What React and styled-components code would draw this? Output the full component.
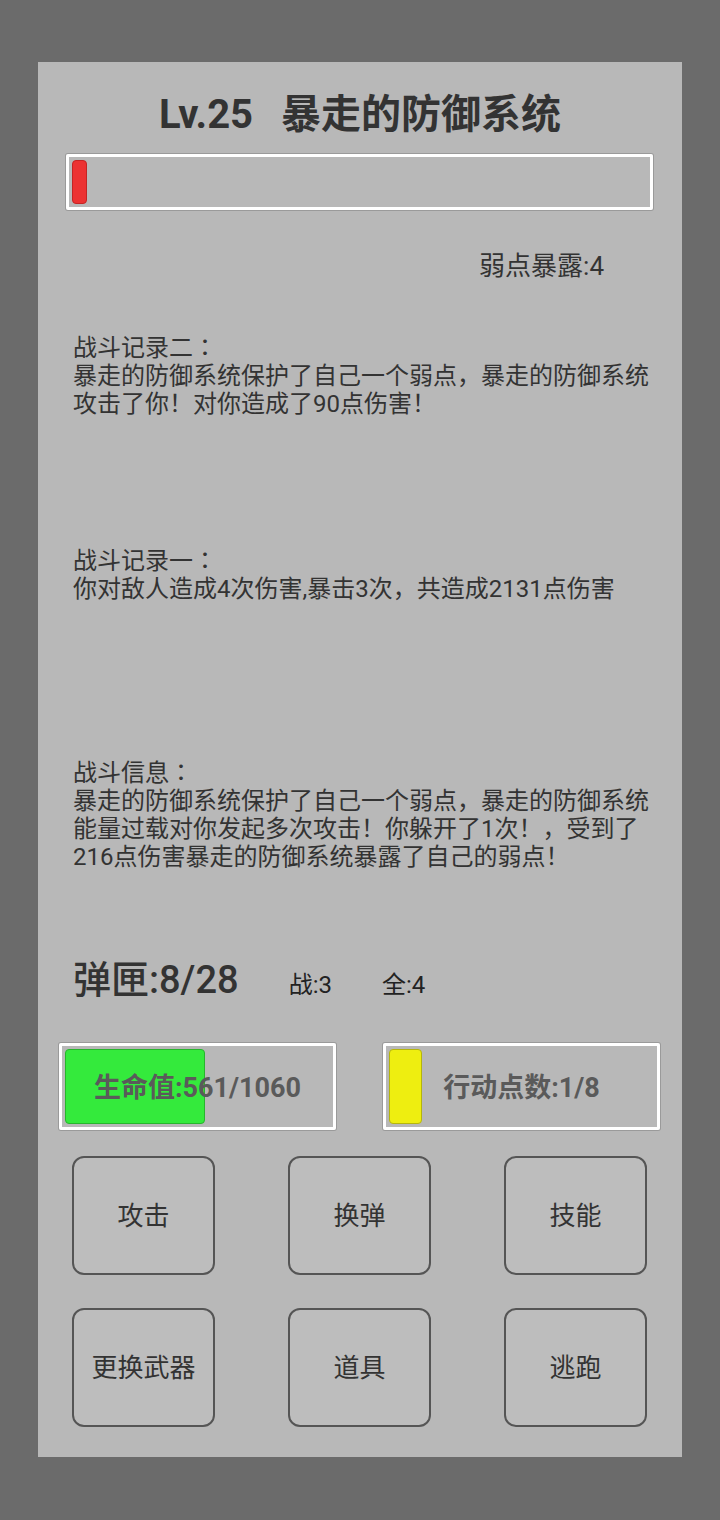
import React from 'react';
import styled, { createGlobalStyle } from 'styled-components';

const Global = createGlobalStyle`
  html, body {
    margin: 0;
    padding: 0;
    background: #6b6b6b;
  }
  body {
    font-family: Roboto, "Noto Sans CJK SC", sans-serif;
  }
`;

const Screen = {
    Page: styled.div`
        width: 720px;
        height: 1520px;
        padding: 62px 38px 0;
        box-sizing: border-box;
    `,
    Panel: styled.div`
        width: 644px;
        height: 1395px;
        background: #b8b8b8;
        box-sizing: border-box;
        padding-top: 29px;
        display: flex;
        flex-direction: column;
        color: #333;
        & > * {
            flex-shrink: 0;
        }
    `,
    Title: styled.h1`
        margin: 0;
        height: 48px;
        line-height: 48px;
        font-size: 40px;
        font-weight: 700;
        text-align: center;
        color: #333;
        word-spacing: 18px;
    `,
    Weak: styled.div`
        margin: 42px 78px 0 0;
        align-self: flex-end;
        font-size: 26px;
        line-height: 28px;
    `,
}

const Bar = {
    Frame: styled.div`
        position: relative;
        box-sizing: border-box;
        border: 3px solid #fff;
        box-shadow: 0 0 0 1px #9a9a9a;
        border-radius: 2px;
        padding: 3px;
        display: flex;
        height: ${p => p.$h}px;
    `,
    Fill: styled.div`
        height: 100%;
        box-sizing: border-box;
        border-radius: 4px;
        background: ${p => p.$color};
        border: 1px solid ${p => p.$edge};
    `,
    Label: styled.span`
        position: absolute;
        inset: 0;
        display: flex;
        align-items: center;
        justify-content: center;
        padding-bottom: 3px;
        font-size: 27px;
        font-weight: 700;
        color: #5a5a5a;
    `,
}

const BossBar = styled(Bar.Frame)`
    margin: 15px 29px 0 28px;
`;

const Log = {
    List: styled.div`
        margin-top: 54px;
        padding-left: 35px;
        padding-right: 20px;
    `,
    Block: styled.div`
        height: ${p => p.$h ? `${p.$h}px` : 'auto'};
        font-size: 24px;
        line-height: 28px;
        color: #333;
        white-space: pre-line;
    `,
    Head: styled.div`
        font-family: Roboto, "Noto Sans CJK JP", sans-serif;
    `,
}

const Ammo = {
    Row: styled.div`
        margin: 86px 0 0 35px;
        display: flex;
        align-items: baseline;
        gap: 50px;
    `,
    Main: styled.span`
        font-size: 38px;
        line-height: 46px;
        font-weight: 500;
        color: #333;
    `,
    Small: styled.span`
        font-size: 24px;
        color: #222;
    `,
}

const Stats = styled.div`
    margin: 40px 22px 0 21px;
    display: grid;
    grid-template-columns: 1fr 1fr;
    column-gap: 47px;
`;

const Actions = {
    Grid: styled.div`
        margin: 26px 35px 0 34px;
        display: grid;
        grid-template-columns: repeat(3, 143px);
        grid-auto-rows: 119px;
        justify-content: space-between;
        row-gap: 33px;
    `,
    Button: styled.button`
        box-sizing: border-box;
        background: #bdbdbd;
        border: 2px solid #555;
        border-radius: 12px;
        font-family: "Noto Sans CJK SC", sans-serif;
        font-size: 26px;
        color: #333;
        padding: 0 0 4px;
    `,
}

const logs = [
    { h: 213, head: '战斗记录二：', text: '暴走的防御系统保护了自己一个弱点，暴走的防御系统\n攻击了你！对你造成了90点伤害！' },
    { h: 212, head: '战斗记录一：', text: '你对敌人造成4次伤害,暴击3次，共造成2131点伤害' },
    { head: '战斗信息：', text: '暴走的防御系统保护了自己一个弱点，暴走的防御系统\n能量过载对你发起多次攻击！你躲开了1次！，受到了\n216点伤害暴走的防御系统暴露了自己的弱点！' },
];

const buttons = ['攻击', '换弹', '技能', '更换武器', '道具', '逃跑'];

function App() {
    const hp = 561, hpMax = 1060;
    const ap = 1, apMax = 8;

    return (
        <Screen.Page>
            <Global />
            <Screen.Panel>
                <Screen.Title>Lv.25 暴走的防御系统</Screen.Title>
                <BossBar $h={56}>
                    <Bar.Fill $color="#ec3232" $edge="#c42424" style={{ width: '2.6%' }} />
                </BossBar>
                <Screen.Weak>弱点暴露:4</Screen.Weak>

                <Log.List>
                    {logs.map((l, i) => (
                        <Log.Block key={i} $h={l.h}>
                            <Log.Head>{l.head}</Log.Head>
                            {l.text}
                        </Log.Block>
                    ))}
                </Log.List>

                <Ammo.Row>
                    <Ammo.Main>弹匣:8/28</Ammo.Main>
                    <Ammo.Small>战:3</Ammo.Small>
                    <Ammo.Small>全:4</Ammo.Small>
                </Ammo.Row>

                <Stats>
                    <Bar.Frame $h={87}>
                        <Bar.Fill $color="#34ea3c" $edge="#27b52d" style={{ width: `${(hp / hpMax) * 100}%` }} />
                        <Bar.Label>生命值:{hp}/{hpMax}</Bar.Label>
                    </Bar.Frame>
                    <Bar.Frame $h={87}>
                        <Bar.Fill $color="#eeee10" $edge="#b5b50c" style={{ width: `${(ap / apMax) * 100}%` }} />
                        <Bar.Label>行动点数:{ap}/{apMax}</Bar.Label>
                    </Bar.Frame>
                </Stats>

                <Actions.Grid>
                    {buttons.map(b => (
                        <Actions.Button key={b}>{b}</Actions.Button>
                    ))}
                </Actions.Grid>
            </Screen.Panel>
        </Screen.Page>
    );
}

export default App;
